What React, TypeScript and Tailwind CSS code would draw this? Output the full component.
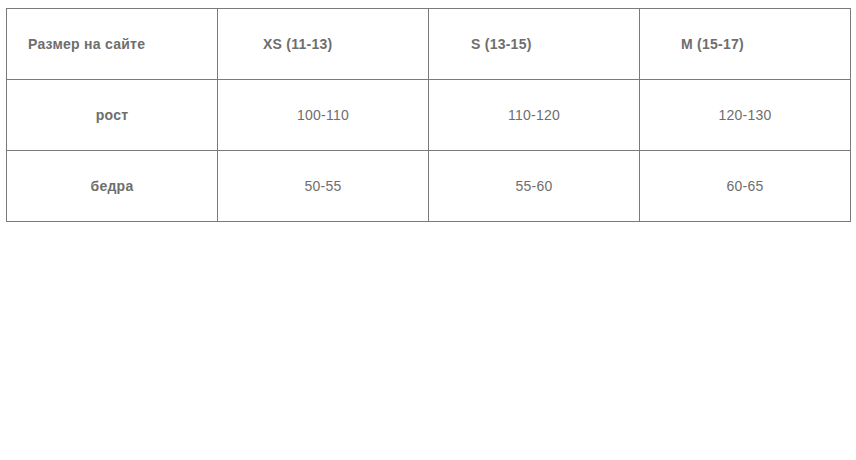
import React from "react";

const rows = [
  { label: "рост", values: ["100-110", "110-120", "120-130"] },
  { label: "бедра", values: ["50-55", "55-60", "60-65"] },
];

const App: React.FC = () => {
  return (
    <div className="min-h-screen bg-white pl-[6px] pt-[8px] font-['Liberation_Sans',Arial,sans-serif] text-[14px] tracking-[0.25px] text-[#6e6e6e]">
      <table className="table-fixed border-collapse">
        <tbody>
          <tr className="h-[71px]">
            <td className="w-[211px] border border-[#7a7a7a] pl-[21px] font-bold">Размер на сайте</td>
            <td className="w-[211px] border border-[#7a7a7a] pl-[45px] font-bold">XS (11-13)</td>
            <td className="w-[211px] border border-[#7a7a7a] pl-[42px] font-bold">S (13-15)</td>
            <td className="w-[211px] border border-[#7a7a7a] pl-[41px] font-bold">M (15-17)</td>
          </tr>
          {rows.map((row) => (
            <tr key={row.label} className="h-[71px]">
              <td className="border border-[#7a7a7a] text-center font-bold">{row.label}</td>
              {row.values.map((v) => (
                <td key={v} className="border border-[#7a7a7a] text-center">
                  {v}
                </td>
              ))}
            </tr>
          ))}
        </tbody>
      </table>
    </div>
  );
};

export default App;
